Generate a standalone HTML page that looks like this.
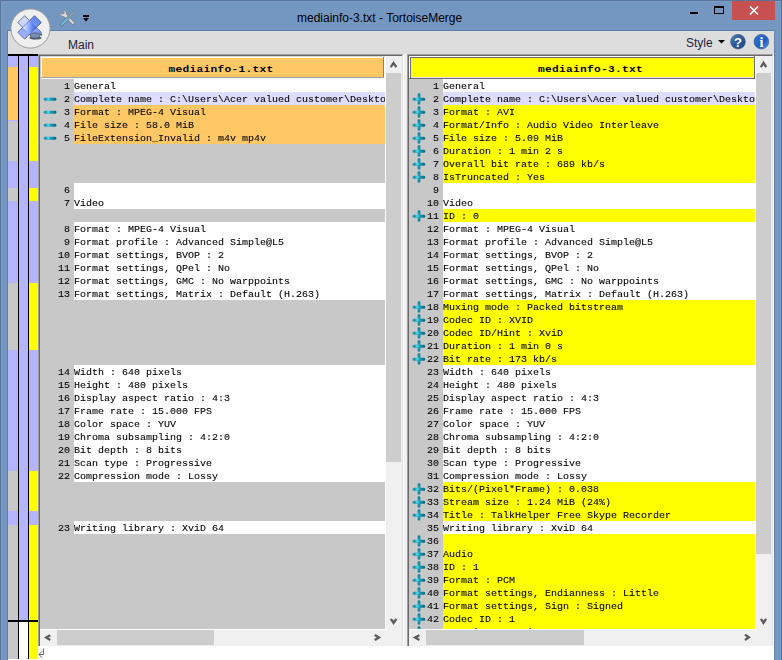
<!DOCTYPE html>
<html><head><meta charset="utf-8"><style>
*{margin:0;padding:0;box-sizing:border-box}
html,body{width:782px;height:660px;overflow:hidden;background:#7497c2;font-family:"Liberation Sans",sans-serif;position:relative}
.a{position:absolute}
.ln{position:absolute;right:0px;left:0;width:30px;text-align:right;height:13px;font-family:"Liberation Mono",monospace;font-size:10px;line-height:13px;color:#000;white-space:pre;-webkit-text-stroke:0.1px #000;transform:scaleY(0.93);transform-origin:0 9.2px}
.tx{position:absolute;left:34px;height:13px;font-family:"Liberation Mono",monospace;font-size:10px;line-height:13px;color:#000;white-space:pre;-webkit-text-stroke:0.1px #000;transform:scaleY(0.93);transform-origin:0 9.2px}
.hd{position:absolute;font-family:"Liberation Mono",monospace;font-weight:bold;font-size:11.2px;letter-spacing:0.28px;line-height:19px;text-align:center;color:#000;transform:scaleY(0.8);transform-origin:50% 14px}
.rt{position:absolute;font-size:12px;color:#1e1e3c;white-space:nowrap}
</style></head>
<body>
<svg width="0" height="0" style="position:absolute"><defs>
<radialGradient id="gm" gradientUnits="userSpaceOnUse" cx="5.3" cy="7" r="7.5"><stop offset="0" stop-color="#5ae8f4"/><stop offset="0.3" stop-color="#1c9fb8"/><stop offset="1" stop-color="#06687e"/></radialGradient>
</defs></svg>
<div class="a" style="left:0px;top:1px;width:782px;height:1px;background:#7a9cc8;"></div>
<div class="a" style="left:1px;top:0px;width:1px;height:660px;background:#7a9cc8;"></div>
<div class="a" style="left:0px;top:0px;width:782px;height:1px;background:#587498;"></div>
<div class="a" style="left:0px;top:0px;width:1px;height:660px;background:#587498;"></div>
<div class="a" style="left:781px;top:0px;width:1px;height:660px;background:#587498;"></div>
<div class="a" style="left:297px;top:11px;font-size:12px;line-height:14px;color:#000;white-space:nowrap">mediainfo-3.txt - TortoiseMerge</div>
<div class="a" style="left:732px;top:1px;width:43px;height:19px;background:#c75050;"></div>
<svg class="a" style="left:749px;top:6px" width="10" height="9"><path d="M1,0.5 L9,8.5 M9,0.5 L1,8.5" stroke="#fff" stroke-width="1.6"/></svg>
<div class="a" style="left:690px;top:12px;width:8px;height:2px;background:#000;"></div>
<div class="a" style="left:714px;top:6px;width:10px;height:8px;border:1px solid #000;border-top-width:2px"></div>
<div class="a" style="left:7px;top:30px;width:768px;height:1px;background:#5f80aa;"></div>
<div class="a" style="left:7px;top:31px;width:1px;height:629px;background:#5f80aa;"></div>
<div class="a" style="left:774px;top:30px;width:1px;height:630px;background:#6585b0;"></div>
<div class="a" style="left:773px;top:31px;width:1px;height:23px;background:#f0f0f0;"></div>
<div class="a" style="left:8px;top:31px;width:766px;height:1px;background:#e4e0da;"></div>
<div class="a" style="left:8px;top:31px;width:766px;height:23px;background:#dddddd;"></div>
<div class="rt" style="left:68px;top:38px">Main</div>
<div class="rt" style="left:686px;top:36px">Style</div>
<svg class="a" style="left:718px;top:40px" width="7" height="4"><path d="M0,0 L7,0 L3.5,3.5Z" fill="#000"/></svg>
<svg class="a" style="left:729px;top:33px" width="18" height="18"><defs><linearGradient id="hb" x1="0" y1="0" x2="1" y2="1"><stop offset="0" stop-color="#5a86c0"/><stop offset="0.45" stop-color="#2c5c9c"/><stop offset="1" stop-color="#1c4686"/></linearGradient></defs><circle cx="9" cy="8.7" r="7.3" fill="url(#hb)" stroke="#33507a" stroke-width="0.7"/><text x="9" y="13.6" text-anchor="middle" font-family="Liberation Sans" font-weight="bold" font-size="13" fill="#fff">?</text></svg>
<svg class="a" style="left:752px;top:33px" width="18" height="18"><defs><linearGradient id="ib" x1="0" y1="0" x2="1" y2="1"><stop offset="0" stop-color="#3a72d0"/><stop offset="0.6" stop-color="#1e5cc8"/><stop offset="1" stop-color="#6aa8f0"/></linearGradient></defs><circle cx="9.4" cy="8.7" r="7.3" fill="url(#ib)" stroke="#3a5a90" stroke-width="0.7"/><text x="9.4" y="14" text-anchor="middle" font-family="Liberation Serif" font-weight="bold" font-size="14" fill="#fff">i</text></svg>
<svg class="a" style="left:0;top:0" width="60" height="60">
<defs>
<linearGradient id="xa" gradientUnits="userSpaceOnUse" x1="18" y1="16" x2="41" y2="39"><stop offset="0" stop-color="#dfe6ff"/><stop offset="0.5" stop-color="#b8c8ff"/><stop offset="1" stop-color="#4a72ea"/></linearGradient>
<linearGradient id="xb" gradientUnits="userSpaceOnUse" x1="18" y1="39" x2="41" y2="16"><stop offset="0" stop-color="#b0c2ff"/><stop offset="0.5" stop-color="#7c9af8"/><stop offset="1" stop-color="#5a82f4"/></linearGradient>
<linearGradient id="xc" gradientUnits="userSpaceOnUse" x1="23" y1="27" x2="36" y2="27"><stop offset="0" stop-color="#f0f4ff"/><stop offset="0.5" stop-color="#8aa8ff"/><stop offset="1" stop-color="#2a58e0"/></linearGradient>
</defs>
<circle cx="30.5" cy="28.5" r="19.6" fill="#efefef" stroke="#9c9c9c" stroke-width="1"/>
<polygon points="34.5,39.1 41.3,32.3 24.7,15.7 17.9,22.5" fill="url(#xa)" stroke="#56669a" stroke-width="0.9" stroke-linejoin="round"/>
<polygon points="41.3,22.5 34.5,15.7 17.9,32.3 24.7,39.1" fill="url(#xb)" stroke="#4a5a98" stroke-width="0.9" stroke-linejoin="round"/>
<polygon points="29.6,20.6 36.4,27.4 29.6,34.2 22.8,27.4" fill="url(#xc)" opacity="0.9"/>
<ellipse cx="35.5" cy="38" rx="6.2" ry="1.6" fill="#404850" opacity="0.85"/>
<ellipse cx="35" cy="35.6" rx="4.6" ry="2.6" fill="#7890b8" stroke="#4a5262" stroke-width="0.8"/>
<circle cx="41" cy="34.5" r="1.3" fill="#606a78"/>
</svg>
<svg class="a" style="left:58px;top:8px" width="20" height="20">
<path d="M6.5,6.5 L15,15" stroke="#7e868e" stroke-width="3.6" stroke-linecap="round"/>
<path d="M6.5,6.5 L15,15" stroke="#d8d8d8" stroke-width="2" stroke-linecap="round"/>
<path d="M2.2,4.6 C1.6,6.8 3.6,9 6,8.6 L8,10.6 L10.4,8.2 L8.4,6.2 C8.8,3.8 6.8,1.8 4.6,2.2 L6.4,4 L5.8,5.6 L4,6.2 Z" fill="#dcdcdc" stroke="#7e868e" stroke-width="0.8" stroke-linejoin="round"/>
<path d="M3.8,16.4 L9.6,10.6" stroke="#4f7f9c" stroke-width="3.8" stroke-linecap="round"/>
<path d="M3.8,16.4 L9.6,10.6" stroke="#7cb4d4" stroke-width="2.2" stroke-linecap="round"/>
<path d="M10,10.2 L16.2,4" stroke="#7a8490" stroke-width="1.8" stroke-linecap="round"/>
<path d="M10,10.2 L16.2,4" stroke="#c0c6cc" stroke-width="0.7" stroke-linecap="round"/>
</svg>
<div class="a" style="left:83px;top:15px;width:6px;height:2px;background:#000;"></div>
<svg class="a" style="left:83px;top:18px" width="6" height="5"><path d="M0,0 L6,0 L3,3.6Z" fill="#000"/></svg>
<div class="a" style="left:8px;top:54px;width:30px;height:2px;background:#000;"></div>
<div class="a" style="left:8px;top:56px;width:10px;height:564px;background:#b4b4ff;"></div>
<div class="a" style="left:18px;top:56px;width:1px;height:603px;background:#000;"></div>
<div class="a" style="left:19px;top:56px;width:9px;height:564px;background:#b4b4ff;"></div>
<div class="a" style="left:28px;top:56px;width:1px;height:603px;background:#000;"></div>
<div class="a" style="left:29px;top:56px;width:9px;height:564px;background:#b4b4ff;"></div>
<div class="a" style="left:8px;top:67px;width:10px;height:53px;background:#ffc864;"></div>
<div class="a" style="left:8px;top:120px;width:10px;height:41px;background:#c8c8c8;"></div>
<div class="a" style="left:8px;top:188px;width:10px;height:13px;background:#c8c8c8;"></div>
<div class="a" style="left:8px;top:283px;width:10px;height:67px;background:#c8c8c8;"></div>
<div class="a" style="left:8px;top:471px;width:10px;height:40px;background:#c8c8c8;"></div>
<div class="a" style="left:8px;top:525px;width:10px;height:95px;background:#c8c8c8;"></div>
<div class="a" style="left:29px;top:67px;width:9px;height:94px;background:#ffff00;"></div>
<div class="a" style="left:29px;top:188px;width:9px;height:13px;background:#ffff00;"></div>
<div class="a" style="left:29px;top:283px;width:9px;height:67px;background:#ffff00;"></div>
<div class="a" style="left:29px;top:471px;width:9px;height:40px;background:#ffff00;"></div>
<div class="a" style="left:29px;top:525px;width:9px;height:95px;background:#ffff00;"></div>
<div class="a" style="left:8px;top:120px;width:10px;height:1px;background:#b4b4ff;"></div>
<div class="a" style="left:8px;top:620px;width:30px;height:2px;background:#000;"></div>
<div class="a" style="left:8px;top:622px;width:10px;height:37px;background:#c8c8c8;"></div>
<div class="a" style="left:19px;top:622px;width:9px;height:37px;background:#fff;"></div>
<div class="a" style="left:29px;top:622px;width:9px;height:37px;background:#ffff00;"></div>
<div class="a" style="left:8px;top:659px;width:30px;height:1px;background:#fff;"></div>
<div class="a" style="left:38px;top:54px;width:366px;height:1px;background:#a0a0a0;"></div>
<div class="a" style="left:38px;top:54px;width:1px;height:594px;background:#a0a0a0;"></div>
<div class="a" style="left:39px;top:55px;width:364px;height:1px;background:#696969;"></div>
<div class="a" style="left:39px;top:55px;width:1px;height:592px;background:#696969;"></div>
<div class="a" style="left:402px;top:55px;width:1px;height:592px;background:#e3e3e3;"></div>
<div class="a" style="left:403px;top:54px;width:1px;height:594px;background:#ffffff;"></div>
<div class="a" style="left:40px;top:56px;width:362px;height:590px;background:#ffffff;"></div>
<div class="a" style="left:40px;top:56px;width:345px;height:1px;background:#d8d8d8;"></div>
<div class="a" style="left:40px;top:56px;width:1px;height:23px;background:#c8c8c8;"></div>
<div class="a" style="left:41px;top:57px;width:343px;height:21px;background:#ffffff;"></div>
<div class="a" style="left:42px;top:58px;width:341px;height:19px;background:#ffc864;"></div>
<div class="a" style="left:383px;top:57px;width:1px;height:21px;background:#7c8090;"></div>
<div class="a" style="left:41px;top:77px;width:343px;height:1px;background:#a0a0a0;"></div>
<div class="hd" style="left:40px;top:60px;width:362px">mediainfo-1.txt</div>
<div class="a" style="left:40px;top:79px;width:345px;height:550px;background:#c8c8c8;"></div>
<div class="a" style="left:40px;top:79px;width:345px;height:550px;overflow:hidden;will-change:transform">
<div class="a" style="left:34px;top:0px;width:311px;height:13px;background:#ffffff;"></div>
<div class="ln" style="top:1px">1</div>
<div class="tx" style="top:1px">General</div>
<div class="a" style="left:34px;top:13px;width:311px;height:13px;background:#dddeff;"></div>
<svg class="a" style="left:3px;top:13px" width="14" height="13"><rect x="0.8" y="5.8" width="12.6" height="2.9" rx="1.45" fill="url(#gm)"/></svg>
<div class="ln" style="top:14px">2</div>
<div class="tx" style="top:14px">Complete name : C:\Users\Acer valued customer\Desktop</div>
<div class="a" style="left:34px;top:26px;width:311px;height:13px;background:#ffc864;"></div>
<svg class="a" style="left:3px;top:26px" width="14" height="13"><rect x="0.8" y="5.8" width="12.6" height="2.9" rx="1.45" fill="url(#gm)"/></svg>
<div class="ln" style="top:27px">3</div>
<div class="tx" style="top:27px">Format : MPEG-4 Visual</div>
<div class="a" style="left:34px;top:39px;width:311px;height:13px;background:#ffc864;"></div>
<svg class="a" style="left:3px;top:39px" width="14" height="13"><rect x="0.8" y="5.8" width="12.6" height="2.9" rx="1.45" fill="url(#gm)"/></svg>
<div class="ln" style="top:40px">4</div>
<div class="tx" style="top:40px">File size : 58.0 MiB</div>
<div class="a" style="left:34px;top:52px;width:311px;height:13px;background:#ffc864;"></div>
<svg class="a" style="left:3px;top:52px" width="14" height="13"><rect x="0.8" y="5.8" width="12.6" height="2.9" rx="1.45" fill="url(#gm)"/></svg>
<div class="ln" style="top:53px">5</div>
<div class="tx" style="top:53px">FileExtension_Invalid : m4v mp4v</div>
<div class="a" style="left:34px;top:104px;width:311px;height:13px;background:#ffffff;"></div>
<div class="ln" style="top:105px">6</div>
<div class="a" style="left:34px;top:117px;width:311px;height:13px;background:#ffffff;"></div>
<div class="ln" style="top:118px">7</div>
<div class="tx" style="top:118px">Video</div>
<div class="a" style="left:34px;top:143px;width:311px;height:13px;background:#ffffff;"></div>
<div class="ln" style="top:144px">8</div>
<div class="tx" style="top:144px">Format : MPEG-4 Visual</div>
<div class="a" style="left:34px;top:156px;width:311px;height:13px;background:#ffffff;"></div>
<div class="ln" style="top:157px">9</div>
<div class="tx" style="top:157px">Format profile : Advanced Simple@L5</div>
<div class="a" style="left:34px;top:169px;width:311px;height:13px;background:#ffffff;"></div>
<div class="ln" style="top:170px">10</div>
<div class="tx" style="top:170px">Format settings, BVOP : 2</div>
<div class="a" style="left:34px;top:182px;width:311px;height:13px;background:#ffffff;"></div>
<div class="ln" style="top:183px">11</div>
<div class="tx" style="top:183px">Format settings, QPel : No</div>
<div class="a" style="left:34px;top:195px;width:311px;height:13px;background:#ffffff;"></div>
<div class="ln" style="top:196px">12</div>
<div class="tx" style="top:196px">Format settings, GMC : No warppoints</div>
<div class="a" style="left:34px;top:208px;width:311px;height:13px;background:#ffffff;"></div>
<div class="ln" style="top:209px">13</div>
<div class="tx" style="top:209px">Format settings, Matrix : Default (H.263)</div>
<div class="a" style="left:34px;top:286px;width:311px;height:13px;background:#ffffff;"></div>
<div class="ln" style="top:287px">14</div>
<div class="tx" style="top:287px">Width : 640 pixels</div>
<div class="a" style="left:34px;top:299px;width:311px;height:13px;background:#ffffff;"></div>
<div class="ln" style="top:300px">15</div>
<div class="tx" style="top:300px">Height : 480 pixels</div>
<div class="a" style="left:34px;top:312px;width:311px;height:13px;background:#ffffff;"></div>
<div class="ln" style="top:313px">16</div>
<div class="tx" style="top:313px">Display aspect ratio : 4:3</div>
<div class="a" style="left:34px;top:325px;width:311px;height:13px;background:#ffffff;"></div>
<div class="ln" style="top:326px">17</div>
<div class="tx" style="top:326px">Frame rate : 15.000 FPS</div>
<div class="a" style="left:34px;top:338px;width:311px;height:13px;background:#ffffff;"></div>
<div class="ln" style="top:339px">18</div>
<div class="tx" style="top:339px">Color space : YUV</div>
<div class="a" style="left:34px;top:351px;width:311px;height:13px;background:#ffffff;"></div>
<div class="ln" style="top:352px">19</div>
<div class="tx" style="top:352px">Chroma subsampling : 4:2:0</div>
<div class="a" style="left:34px;top:364px;width:311px;height:13px;background:#ffffff;"></div>
<div class="ln" style="top:365px">20</div>
<div class="tx" style="top:365px">Bit depth : 8 bits</div>
<div class="a" style="left:34px;top:377px;width:311px;height:13px;background:#ffffff;"></div>
<div class="ln" style="top:378px">21</div>
<div class="tx" style="top:378px">Scan type : Progressive</div>
<div class="a" style="left:34px;top:390px;width:311px;height:13px;background:#ffffff;"></div>
<div class="ln" style="top:391px">22</div>
<div class="tx" style="top:391px">Compression mode : Lossy</div>
<div class="a" style="left:34px;top:442px;width:311px;height:13px;background:#ffffff;"></div>
<div class="ln" style="top:443px">23</div>
<div class="tx" style="top:443px">Writing library : XviD 64</div>
</div>
<div class="a" style="left:386px;top:56px;width:16px;height:574px;background:#f0f0f0;"></div>
<div class="a" style="left:386px;top:73px;width:15px;height:389px;background:#cdcdcd;"></div>
<svg class="a" style="left:387px;top:59px" width="13" height="12"><polyline points="3.77,8.03 6.55,3.96 9.33,8.03" fill="none" stroke="#5a5a5a" stroke-width="2.3" stroke-linejoin="miter"/></svg>
<svg class="a" style="left:387px;top:615px" width="13" height="12"><polyline points="3.87,3.77 6.60,7.94 9.33,3.77" fill="none" stroke="#5a5a5a" stroke-width="2.3" stroke-linejoin="miter"/></svg>
<div class="a" style="left:40px;top:630px;width:362px;height:16px;background:#f0f0f0;"></div>
<div class="a" style="left:39px;top:646px;width:364px;height:1px;background:#e3e3e3;"></div>
<div class="a" style="left:57px;top:630px;width:157px;height:15px;background:#cdcdcd;"></div>
<svg class="a" style="left:43px;top:632px" width="11" height="12"><polyline points="7.23,3.17 3.16,5.60 7.23,8.03" fill="none" stroke="#5a5a5a" stroke-width="2.3" stroke-linejoin="miter"/></svg>
<svg class="a" style="left:371px;top:632px" width="12" height="11"><polyline points="3.77,2.97 7.94,5.45 3.77,7.93" fill="none" stroke="#5a5a5a" stroke-width="2.3" stroke-linejoin="miter"/></svg>
<div class="a" style="left:404px;top:54px;width:3px;height:594px;background:#f0f0f0;"></div>
<div class="a" style="left:407px;top:54px;width:367px;height:1px;background:#a0a0a0;"></div>
<div class="a" style="left:407px;top:54px;width:1px;height:594px;background:#a0a0a0;"></div>
<div class="a" style="left:408px;top:55px;width:365px;height:1px;background:#696969;"></div>
<div class="a" style="left:408px;top:55px;width:1px;height:592px;background:#696969;"></div>
<div class="a" style="left:772px;top:55px;width:1px;height:592px;background:#e3e3e3;"></div>
<div class="a" style="left:773px;top:54px;width:1px;height:594px;background:#ffffff;"></div>
<div class="a" style="left:409px;top:56px;width:363px;height:590px;background:#ffffff;"></div>
<div class="a" style="left:409px;top:56px;width:346px;height:23px;background:#ffffff;"></div>
<div class="a" style="left:410px;top:57px;width:344px;height:21px;background:#6c6c88;"></div>
<div class="a" style="left:411px;top:58px;width:343px;height:20px;background:#e4e4f0;"></div>
<div class="a" style="left:411px;top:58px;width:342px;height:19px;background:#ffff00;"></div>
<div class="a" style="left:754px;top:56px;width:1px;height:23px;background:#6a6a6a;"></div>
<div class="a" style="left:409px;top:78px;width:346px;height:1px;background:#6a6a6a;"></div>
<div class="hd" style="left:409px;top:60px;width:363px">mediainfo-3.txt</div>
<div class="a" style="left:409px;top:79px;width:346px;height:550px;background:#c8c8c8;"></div>
<div class="a" style="left:409px;top:79px;width:346px;height:550px;overflow:hidden;will-change:transform">
<div class="a" style="left:34px;top:0px;width:312px;height:13px;background:#ffffff;"></div>
<div class="ln" style="top:1px">1</div>
<div class="tx" style="top:1px">General</div>
<div class="a" style="left:34px;top:13px;width:312px;height:13px;background:#dddeff;"></div>
<svg class="a" style="left:3px;top:13px" width="14" height="13"><path d="M2.1,5.7 H5.6 V2.6 A1.4,1.4 0 0 1 8.4,2.6 V5.7 H11.8 A1.5,1.5 0 0 1 11.8,8.7 H8.4 V11.3 A1.4,1.4 0 0 1 5.6,11.3 V8.7 H2.1 A1.5,1.5 0 0 1 2.1,5.7 Z" fill="url(#gm)"/></svg>
<div class="ln" style="top:14px">2</div>
<div class="tx" style="top:14px">Complete name : C:\Users\Acer valued customer\Desktop</div>
<div class="a" style="left:34px;top:26px;width:312px;height:13px;background:#ffff00;"></div>
<svg class="a" style="left:3px;top:26px" width="14" height="13"><path d="M2.1,5.7 H5.6 V2.6 A1.4,1.4 0 0 1 8.4,2.6 V5.7 H11.8 A1.5,1.5 0 0 1 11.8,8.7 H8.4 V11.3 A1.4,1.4 0 0 1 5.6,11.3 V8.7 H2.1 A1.5,1.5 0 0 1 2.1,5.7 Z" fill="url(#gm)"/></svg>
<div class="ln" style="top:27px">3</div>
<div class="tx" style="top:27px">Format : AVI</div>
<div class="a" style="left:34px;top:39px;width:312px;height:13px;background:#ffff00;"></div>
<svg class="a" style="left:3px;top:39px" width="14" height="13"><path d="M2.1,5.7 H5.6 V2.6 A1.4,1.4 0 0 1 8.4,2.6 V5.7 H11.8 A1.5,1.5 0 0 1 11.8,8.7 H8.4 V11.3 A1.4,1.4 0 0 1 5.6,11.3 V8.7 H2.1 A1.5,1.5 0 0 1 2.1,5.7 Z" fill="url(#gm)"/></svg>
<div class="ln" style="top:40px">4</div>
<div class="tx" style="top:40px">Format/Info : Audio Video Interleave</div>
<div class="a" style="left:34px;top:52px;width:312px;height:13px;background:#ffff00;"></div>
<svg class="a" style="left:3px;top:52px" width="14" height="13"><path d="M2.1,5.7 H5.6 V2.6 A1.4,1.4 0 0 1 8.4,2.6 V5.7 H11.8 A1.5,1.5 0 0 1 11.8,8.7 H8.4 V11.3 A1.4,1.4 0 0 1 5.6,11.3 V8.7 H2.1 A1.5,1.5 0 0 1 2.1,5.7 Z" fill="url(#gm)"/></svg>
<div class="ln" style="top:53px">5</div>
<div class="tx" style="top:53px">File size : 5.09 MiB</div>
<div class="a" style="left:34px;top:65px;width:312px;height:13px;background:#ffff00;"></div>
<svg class="a" style="left:3px;top:65px" width="14" height="13"><path d="M2.1,5.7 H5.6 V2.6 A1.4,1.4 0 0 1 8.4,2.6 V5.7 H11.8 A1.5,1.5 0 0 1 11.8,8.7 H8.4 V11.3 A1.4,1.4 0 0 1 5.6,11.3 V8.7 H2.1 A1.5,1.5 0 0 1 2.1,5.7 Z" fill="url(#gm)"/></svg>
<div class="ln" style="top:66px">6</div>
<div class="tx" style="top:66px">Duration : 1 min 2 s</div>
<div class="a" style="left:34px;top:78px;width:312px;height:13px;background:#ffff00;"></div>
<svg class="a" style="left:3px;top:78px" width="14" height="13"><path d="M2.1,5.7 H5.6 V2.6 A1.4,1.4 0 0 1 8.4,2.6 V5.7 H11.8 A1.5,1.5 0 0 1 11.8,8.7 H8.4 V11.3 A1.4,1.4 0 0 1 5.6,11.3 V8.7 H2.1 A1.5,1.5 0 0 1 2.1,5.7 Z" fill="url(#gm)"/></svg>
<div class="ln" style="top:79px">7</div>
<div class="tx" style="top:79px">Overall bit rate : 689 kb/s</div>
<div class="a" style="left:34px;top:91px;width:312px;height:13px;background:#ffff00;"></div>
<svg class="a" style="left:3px;top:91px" width="14" height="13"><path d="M2.1,5.7 H5.6 V2.6 A1.4,1.4 0 0 1 8.4,2.6 V5.7 H11.8 A1.5,1.5 0 0 1 11.8,8.7 H8.4 V11.3 A1.4,1.4 0 0 1 5.6,11.3 V8.7 H2.1 A1.5,1.5 0 0 1 2.1,5.7 Z" fill="url(#gm)"/></svg>
<div class="ln" style="top:92px">8</div>
<div class="tx" style="top:92px">IsTruncated : Yes</div>
<div class="a" style="left:34px;top:104px;width:312px;height:13px;background:#ffffff;"></div>
<div class="ln" style="top:105px">9</div>
<div class="a" style="left:34px;top:117px;width:312px;height:13px;background:#ffffff;"></div>
<div class="ln" style="top:118px">10</div>
<div class="tx" style="top:118px">Video</div>
<div class="a" style="left:34px;top:130px;width:312px;height:13px;background:#ffff00;"></div>
<svg class="a" style="left:3px;top:130px" width="14" height="13"><path d="M2.1,5.7 H5.6 V2.6 A1.4,1.4 0 0 1 8.4,2.6 V5.7 H11.8 A1.5,1.5 0 0 1 11.8,8.7 H8.4 V11.3 A1.4,1.4 0 0 1 5.6,11.3 V8.7 H2.1 A1.5,1.5 0 0 1 2.1,5.7 Z" fill="url(#gm)"/></svg>
<div class="ln" style="top:131px">11</div>
<div class="tx" style="top:131px">ID : 0</div>
<div class="a" style="left:34px;top:143px;width:312px;height:13px;background:#ffffff;"></div>
<div class="ln" style="top:144px">12</div>
<div class="tx" style="top:144px">Format : MPEG-4 Visual</div>
<div class="a" style="left:34px;top:156px;width:312px;height:13px;background:#ffffff;"></div>
<div class="ln" style="top:157px">13</div>
<div class="tx" style="top:157px">Format profile : Advanced Simple@L5</div>
<div class="a" style="left:34px;top:169px;width:312px;height:13px;background:#ffffff;"></div>
<div class="ln" style="top:170px">14</div>
<div class="tx" style="top:170px">Format settings, BVOP : 2</div>
<div class="a" style="left:34px;top:182px;width:312px;height:13px;background:#ffffff;"></div>
<div class="ln" style="top:183px">15</div>
<div class="tx" style="top:183px">Format settings, QPel : No</div>
<div class="a" style="left:34px;top:195px;width:312px;height:13px;background:#ffffff;"></div>
<div class="ln" style="top:196px">16</div>
<div class="tx" style="top:196px">Format settings, GMC : No warppoints</div>
<div class="a" style="left:34px;top:208px;width:312px;height:13px;background:#ffffff;"></div>
<div class="ln" style="top:209px">17</div>
<div class="tx" style="top:209px">Format settings, Matrix : Default (H.263)</div>
<div class="a" style="left:34px;top:221px;width:312px;height:13px;background:#ffff00;"></div>
<svg class="a" style="left:3px;top:221px" width="14" height="13"><path d="M2.1,5.7 H5.6 V2.6 A1.4,1.4 0 0 1 8.4,2.6 V5.7 H11.8 A1.5,1.5 0 0 1 11.8,8.7 H8.4 V11.3 A1.4,1.4 0 0 1 5.6,11.3 V8.7 H2.1 A1.5,1.5 0 0 1 2.1,5.7 Z" fill="url(#gm)"/></svg>
<div class="ln" style="top:222px">18</div>
<div class="tx" style="top:222px">Muxing mode : Packed bitstream</div>
<div class="a" style="left:34px;top:234px;width:312px;height:13px;background:#ffff00;"></div>
<svg class="a" style="left:3px;top:234px" width="14" height="13"><path d="M2.1,5.7 H5.6 V2.6 A1.4,1.4 0 0 1 8.4,2.6 V5.7 H11.8 A1.5,1.5 0 0 1 11.8,8.7 H8.4 V11.3 A1.4,1.4 0 0 1 5.6,11.3 V8.7 H2.1 A1.5,1.5 0 0 1 2.1,5.7 Z" fill="url(#gm)"/></svg>
<div class="ln" style="top:235px">19</div>
<div class="tx" style="top:235px">Codec ID : XVID</div>
<div class="a" style="left:34px;top:247px;width:312px;height:13px;background:#ffff00;"></div>
<svg class="a" style="left:3px;top:247px" width="14" height="13"><path d="M2.1,5.7 H5.6 V2.6 A1.4,1.4 0 0 1 8.4,2.6 V5.7 H11.8 A1.5,1.5 0 0 1 11.8,8.7 H8.4 V11.3 A1.4,1.4 0 0 1 5.6,11.3 V8.7 H2.1 A1.5,1.5 0 0 1 2.1,5.7 Z" fill="url(#gm)"/></svg>
<div class="ln" style="top:248px">20</div>
<div class="tx" style="top:248px">Codec ID/Hint : XviD</div>
<div class="a" style="left:34px;top:260px;width:312px;height:13px;background:#ffff00;"></div>
<svg class="a" style="left:3px;top:260px" width="14" height="13"><path d="M2.1,5.7 H5.6 V2.6 A1.4,1.4 0 0 1 8.4,2.6 V5.7 H11.8 A1.5,1.5 0 0 1 11.8,8.7 H8.4 V11.3 A1.4,1.4 0 0 1 5.6,11.3 V8.7 H2.1 A1.5,1.5 0 0 1 2.1,5.7 Z" fill="url(#gm)"/></svg>
<div class="ln" style="top:261px">21</div>
<div class="tx" style="top:261px">Duration : 1 min 0 s</div>
<div class="a" style="left:34px;top:273px;width:312px;height:13px;background:#ffff00;"></div>
<svg class="a" style="left:3px;top:273px" width="14" height="13"><path d="M2.1,5.7 H5.6 V2.6 A1.4,1.4 0 0 1 8.4,2.6 V5.7 H11.8 A1.5,1.5 0 0 1 11.8,8.7 H8.4 V11.3 A1.4,1.4 0 0 1 5.6,11.3 V8.7 H2.1 A1.5,1.5 0 0 1 2.1,5.7 Z" fill="url(#gm)"/></svg>
<div class="ln" style="top:274px">22</div>
<div class="tx" style="top:274px">Bit rate : 173 kb/s</div>
<div class="a" style="left:34px;top:286px;width:312px;height:13px;background:#ffffff;"></div>
<div class="ln" style="top:287px">23</div>
<div class="tx" style="top:287px">Width : 640 pixels</div>
<div class="a" style="left:34px;top:299px;width:312px;height:13px;background:#ffffff;"></div>
<div class="ln" style="top:300px">24</div>
<div class="tx" style="top:300px">Height : 480 pixels</div>
<div class="a" style="left:34px;top:312px;width:312px;height:13px;background:#ffffff;"></div>
<div class="ln" style="top:313px">25</div>
<div class="tx" style="top:313px">Display aspect ratio : 4:3</div>
<div class="a" style="left:34px;top:325px;width:312px;height:13px;background:#ffffff;"></div>
<div class="ln" style="top:326px">26</div>
<div class="tx" style="top:326px">Frame rate : 15.000 FPS</div>
<div class="a" style="left:34px;top:338px;width:312px;height:13px;background:#ffffff;"></div>
<div class="ln" style="top:339px">27</div>
<div class="tx" style="top:339px">Color space : YUV</div>
<div class="a" style="left:34px;top:351px;width:312px;height:13px;background:#ffffff;"></div>
<div class="ln" style="top:352px">28</div>
<div class="tx" style="top:352px">Chroma subsampling : 4:2:0</div>
<div class="a" style="left:34px;top:364px;width:312px;height:13px;background:#ffffff;"></div>
<div class="ln" style="top:365px">29</div>
<div class="tx" style="top:365px">Bit depth : 8 bits</div>
<div class="a" style="left:34px;top:377px;width:312px;height:13px;background:#ffffff;"></div>
<div class="ln" style="top:378px">30</div>
<div class="tx" style="top:378px">Scan type : Progressive</div>
<div class="a" style="left:34px;top:390px;width:312px;height:13px;background:#ffffff;"></div>
<div class="ln" style="top:391px">31</div>
<div class="tx" style="top:391px">Compression mode : Lossy</div>
<div class="a" style="left:34px;top:403px;width:312px;height:13px;background:#ffff00;"></div>
<svg class="a" style="left:3px;top:403px" width="14" height="13"><path d="M2.1,5.7 H5.6 V2.6 A1.4,1.4 0 0 1 8.4,2.6 V5.7 H11.8 A1.5,1.5 0 0 1 11.8,8.7 H8.4 V11.3 A1.4,1.4 0 0 1 5.6,11.3 V8.7 H2.1 A1.5,1.5 0 0 1 2.1,5.7 Z" fill="url(#gm)"/></svg>
<div class="ln" style="top:404px">32</div>
<div class="tx" style="top:404px">Bits/(Pixel*Frame) : 0.038</div>
<div class="a" style="left:34px;top:416px;width:312px;height:13px;background:#ffff00;"></div>
<svg class="a" style="left:3px;top:416px" width="14" height="13"><path d="M2.1,5.7 H5.6 V2.6 A1.4,1.4 0 0 1 8.4,2.6 V5.7 H11.8 A1.5,1.5 0 0 1 11.8,8.7 H8.4 V11.3 A1.4,1.4 0 0 1 5.6,11.3 V8.7 H2.1 A1.5,1.5 0 0 1 2.1,5.7 Z" fill="url(#gm)"/></svg>
<div class="ln" style="top:417px">33</div>
<div class="tx" style="top:417px">Stream size : 1.24 MiB (24%)</div>
<div class="a" style="left:34px;top:429px;width:312px;height:13px;background:#ffff00;"></div>
<svg class="a" style="left:3px;top:429px" width="14" height="13"><path d="M2.1,5.7 H5.6 V2.6 A1.4,1.4 0 0 1 8.4,2.6 V5.7 H11.8 A1.5,1.5 0 0 1 11.8,8.7 H8.4 V11.3 A1.4,1.4 0 0 1 5.6,11.3 V8.7 H2.1 A1.5,1.5 0 0 1 2.1,5.7 Z" fill="url(#gm)"/></svg>
<div class="ln" style="top:430px">34</div>
<div class="tx" style="top:430px">Title : TalkHelper Free Skype Recorder</div>
<div class="a" style="left:34px;top:442px;width:312px;height:13px;background:#ffffff;"></div>
<div class="ln" style="top:443px">35</div>
<div class="tx" style="top:443px">Writing library : XviD 64</div>
<div class="a" style="left:34px;top:455px;width:312px;height:13px;background:#ffff00;"></div>
<svg class="a" style="left:3px;top:455px" width="14" height="13"><path d="M2.1,5.7 H5.6 V2.6 A1.4,1.4 0 0 1 8.4,2.6 V5.7 H11.8 A1.5,1.5 0 0 1 11.8,8.7 H8.4 V11.3 A1.4,1.4 0 0 1 5.6,11.3 V8.7 H2.1 A1.5,1.5 0 0 1 2.1,5.7 Z" fill="url(#gm)"/></svg>
<div class="ln" style="top:456px">36</div>
<div class="a" style="left:34px;top:468px;width:312px;height:13px;background:#ffff00;"></div>
<svg class="a" style="left:3px;top:468px" width="14" height="13"><path d="M2.1,5.7 H5.6 V2.6 A1.4,1.4 0 0 1 8.4,2.6 V5.7 H11.8 A1.5,1.5 0 0 1 11.8,8.7 H8.4 V11.3 A1.4,1.4 0 0 1 5.6,11.3 V8.7 H2.1 A1.5,1.5 0 0 1 2.1,5.7 Z" fill="url(#gm)"/></svg>
<div class="ln" style="top:469px">37</div>
<div class="tx" style="top:469px">Audio</div>
<div class="a" style="left:34px;top:481px;width:312px;height:13px;background:#ffff00;"></div>
<svg class="a" style="left:3px;top:481px" width="14" height="13"><path d="M2.1,5.7 H5.6 V2.6 A1.4,1.4 0 0 1 8.4,2.6 V5.7 H11.8 A1.5,1.5 0 0 1 11.8,8.7 H8.4 V11.3 A1.4,1.4 0 0 1 5.6,11.3 V8.7 H2.1 A1.5,1.5 0 0 1 2.1,5.7 Z" fill="url(#gm)"/></svg>
<div class="ln" style="top:482px">38</div>
<div class="tx" style="top:482px">ID : 1</div>
<div class="a" style="left:34px;top:494px;width:312px;height:13px;background:#ffff00;"></div>
<svg class="a" style="left:3px;top:494px" width="14" height="13"><path d="M2.1,5.7 H5.6 V2.6 A1.4,1.4 0 0 1 8.4,2.6 V5.7 H11.8 A1.5,1.5 0 0 1 11.8,8.7 H8.4 V11.3 A1.4,1.4 0 0 1 5.6,11.3 V8.7 H2.1 A1.5,1.5 0 0 1 2.1,5.7 Z" fill="url(#gm)"/></svg>
<div class="ln" style="top:495px">39</div>
<div class="tx" style="top:495px">Format : PCM</div>
<div class="a" style="left:34px;top:507px;width:312px;height:13px;background:#ffff00;"></div>
<svg class="a" style="left:3px;top:507px" width="14" height="13"><path d="M2.1,5.7 H5.6 V2.6 A1.4,1.4 0 0 1 8.4,2.6 V5.7 H11.8 A1.5,1.5 0 0 1 11.8,8.7 H8.4 V11.3 A1.4,1.4 0 0 1 5.6,11.3 V8.7 H2.1 A1.5,1.5 0 0 1 2.1,5.7 Z" fill="url(#gm)"/></svg>
<div class="ln" style="top:508px">40</div>
<div class="tx" style="top:508px">Format settings, Endianness : Little</div>
<div class="a" style="left:34px;top:520px;width:312px;height:13px;background:#ffff00;"></div>
<svg class="a" style="left:3px;top:520px" width="14" height="13"><path d="M2.1,5.7 H5.6 V2.6 A1.4,1.4 0 0 1 8.4,2.6 V5.7 H11.8 A1.5,1.5 0 0 1 11.8,8.7 H8.4 V11.3 A1.4,1.4 0 0 1 5.6,11.3 V8.7 H2.1 A1.5,1.5 0 0 1 2.1,5.7 Z" fill="url(#gm)"/></svg>
<div class="ln" style="top:521px">41</div>
<div class="tx" style="top:521px">Format settings, Sign : Signed</div>
<div class="a" style="left:34px;top:533px;width:312px;height:13px;background:#ffff00;"></div>
<svg class="a" style="left:3px;top:533px" width="14" height="13"><path d="M2.1,5.7 H5.6 V2.6 A1.4,1.4 0 0 1 8.4,2.6 V5.7 H11.8 A1.5,1.5 0 0 1 11.8,8.7 H8.4 V11.3 A1.4,1.4 0 0 1 5.6,11.3 V8.7 H2.1 A1.5,1.5 0 0 1 2.1,5.7 Z" fill="url(#gm)"/></svg>
<div class="ln" style="top:534px">42</div>
<div class="tx" style="top:534px">Codec ID : 1</div>
<div class="a" style="left:34px;top:546px;width:312px;height:13px;background:#ffff00;"></div>
<svg class="a" style="left:3px;top:546px" width="14" height="13"><path d="M2.1,5.7 H5.6 V2.6 A1.4,1.4 0 0 1 8.4,2.6 V5.7 H11.8 A1.5,1.5 0 0 1 11.8,8.7 H8.4 V11.3 A1.4,1.4 0 0 1 5.6,11.3 V8.7 H2.1 A1.5,1.5 0 0 1 2.1,5.7 Z" fill="url(#gm)"/></svg>
<div class="ln" style="top:547px">43</div>
<div class="tx" style="top:547px">Duration : 1 min 2 s</div>
</div>
<div class="a" style="left:756px;top:56px;width:16px;height:574px;background:#f0f0f0;"></div>
<div class="a" style="left:756px;top:73px;width:15px;height:481px;background:#cdcdcd;"></div>
<svg class="a" style="left:757px;top:59px" width="13" height="12"><polyline points="3.87,8.03 6.55,3.96 9.23,8.03" fill="none" stroke="#5a5a5a" stroke-width="2.3" stroke-linejoin="miter"/></svg>
<svg class="a" style="left:758px;top:615px" width="12" height="12"><polyline points="2.97,3.77 5.50,7.84 8.03,3.77" fill="none" stroke="#5a5a5a" stroke-width="2.3" stroke-linejoin="miter"/></svg>
<div class="a" style="left:409px;top:630px;width:363px;height:16px;background:#f0f0f0;"></div>
<div class="a" style="left:408px;top:646px;width:365px;height:1px;background:#e3e3e3;"></div>
<div class="a" style="left:426px;top:630px;width:158px;height:15px;background:#cdcdcd;"></div>
<svg class="a" style="left:411px;top:632px" width="12" height="12"><polyline points="8.43,3.17 4.06,5.60 8.43,8.03" fill="none" stroke="#5a5a5a" stroke-width="2.3" stroke-linejoin="miter"/></svg>
<svg class="a" style="left:742px;top:631px" width="11" height="13"><polyline points="2.97,3.67 6.84,6.35 2.97,9.03" fill="none" stroke="#5a5a5a" stroke-width="2.3" stroke-linejoin="miter"/></svg>
<div class="a" style="left:38px;top:646px;width:736px;height:14px;background:#fff;"></div>
<svg class="a" style="left:37px;top:647px" width="9" height="13"><path d="M6.5,1.5 V7.5 H2" fill="none" stroke="#6a6a6a" stroke-width="1"/><path d="M5.2,4.2 L1.9,7.5 L5.2,10.8" fill="none" stroke="#6a6a6a" stroke-width="1"/></svg>
</body></html>
